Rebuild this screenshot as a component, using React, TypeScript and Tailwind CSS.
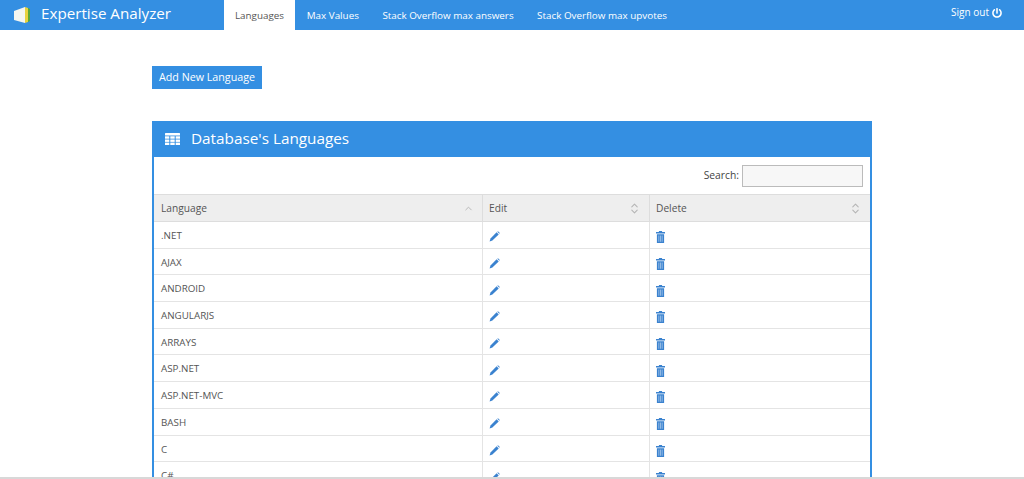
import { ChevronUp, ChevronsUpDown } from "lucide-react";
import { FaPowerOff } from "react-icons/fa";

const tabs = ["Languages", "Max Values", "Stack Overflow max answers", "Stack Overflow max upvotes"];
const languages = [".NET", "AJAX", "ANDROID", "ANGULARJS", "ARRAYS", "ASP.NET", "ASP.NET-MVC", "BASH", "C", "C#"];

function Logo() {
  return (
    <svg width="18" height="18" viewBox="0 0 18 18">
      <path d="M1 5 L12 1 L12 17 L1 14 Z" fill="#f4f6f0" />
      <path d="M12 1 L15 2 L15 16 L12 17 Z" fill="#e8d23c" />
      <path d="M15 2 L17 3 L17 15 L15 16 Z" fill="#5aa63c" />
    </svg>
  );
}

function GridIcon() {
  return (
    <svg width="15" height="12" viewBox="0 0 15 12" fill="currentColor">
      <rect x="0" y="0" width="15" height="2.5" rx="0.5" />
      <rect x="0" y="3.3" width="4.3" height="2.4" />
      <rect x="5.3" y="3.3" width="4.4" height="2.4" />
      <rect x="10.7" y="3.3" width="4.3" height="2.4" />
      <rect x="0" y="6.5" width="4.3" height="2.4" />
      <rect x="5.3" y="6.5" width="4.4" height="2.4" />
      <rect x="10.7" y="6.5" width="4.3" height="2.4" />
      <rect x="0" y="9.6" width="4.3" height="2.4" />
      <rect x="5.3" y="9.6" width="4.4" height="2.4" />
      <rect x="10.7" y="9.6" width="4.3" height="2.4" />
    </svg>
  );
}

function Pencil() {
  return (
    <svg width="11" height="11" viewBox="0 0 11 11" fill="#3a82cf">
      <path d="M7.6 1.3 L9.7 3.4 L3.4 9.4 L0.6 10.4 L1.5 7.4 Z" />
      <path d="M8.3 0.7 L9 0.2 L10.8 2 L10.3 2.7 Z" />
    </svg>
  );
}

function Trash() {
  return (
    <svg width="9" height="12" viewBox="0 0 10 12" fill="#3a82cf" preserveAspectRatio="none">
      <path d="M3.5 0 H6.5 L7 1 H10 V2.6 H0 V1 H3 Z" />
      <path d="M1 3.3 H9 V12 H1 Z M3 4.5 V10.8 H3.5 V4.5 Z M4.75 4.5 V10.8 H5.25 V4.5 Z M6.5 4.5 V10.8 H7 V4.5 Z" fillRule="evenodd" />
    </svg>
  );
}

function SortHead({ label, width, sorted }: { label: string; width: string; sorted?: boolean }) {
  return (
    <div className={`${width} flex items-center justify-between pl-[6px] pr-[8px] pt-[1px] border-r border-[#dddddd] first:pl-[7px] last:border-r-0`}>
      <span>{label}</span>
      {sorted ? (
        <ChevronUp size={11} className="text-[#b5b5b5]" />
      ) : (
        <ChevronsUpDown size={13} className="text-[#b5b5b5]" />
      )}
    </div>
  );
}

export default function App() {
  return (
    <div className="relative h-[479px] overflow-hidden bg-white text-[#555555] font-['Open_Sans',sans-serif]">
      <nav className="flex h-[30px] items-stretch bg-[#348fe2] text-white">
        <div className="flex w-[224px] items-center pl-[13px]">
          <Logo />
          <span className="ml-[10px] -mt-[2px] text-[15.2px] leading-none">Expertise Analyzer</span>
        </div>
        {tabs.map((tab, i) => (
          <div
            key={tab}
            className={`flex items-center justify-center text-[9.85px] ${i === 0 ? "w-[71px] bg-white text-[#555555]" : "px-[11.75px]"}`}
          >
            {tab}
          </div>
        ))}
        <div className="ml-auto flex items-start gap-[3px] pr-[22px] pt-[5px] text-[10px]">
          <span>Sign out</span>
          <FaPowerOff size={10} className="mt-[3px]" />
        </div>
      </nav>

      <main className="ml-[152px] w-[720px]">
        <button className="mt-[36px] flex h-[23px] w-[110px] items-center justify-center bg-[#348fe2] text-[10.7px] text-white">
          Add New Language
        </button>

        <section className="mt-[32px] border-x-2 border-[#348fe2]">
          <header className="-mx-[2px] flex h-[36px] items-center bg-[#348fe2] pb-[1px] pl-[13px] text-white">
            <GridIcon />
            <h2 className="ml-[11px] text-[15.3px]">Database's Languages</h2>
          </header>

          <div className="flex h-[37px] items-center justify-end pr-[7px] text-[10.3px] text-[#444444]">
            <span className="font-medium">Search:</span>
            <input className="ml-[3px] h-[22px] w-[121px] border border-[#bbbbbb] bg-[#f7f7f7]" />
          </div>

          <div className="flex h-[28px] border-y border-[#dddddd] bg-[#eeeeee] text-[10.2px] font-medium text-[#555555]">
            <SortHead label="Language" width="w-[329px]" sorted />
            <SortHead label="Edit" width="w-[167px]" />
            <SortHead label="Delete" width="flex-1" />
          </div>

          {languages.map((lang) => (
            <div key={lang} className="flex h-[26.7px] border-b border-[#e4e4e4] text-[9.8px]">
              <div className="flex w-[329px] items-start border-r border-[#e4e4e4] pl-[7px] pt-[7px]">{lang}</div>
              <div className="flex w-[167px] items-center border-r border-[#e4e4e4] pl-[6px] pt-[4px]">
                <Pencil />
              </div>
              <div className="flex flex-1 items-center pl-[6px] pt-[5px]">
                <Trash />
              </div>
            </div>
          ))}
        </section>
      </main>

      <div className="absolute inset-x-0 bottom-0 h-[2px] bg-[#d8d8d8]" />
    </div>
  );
}
